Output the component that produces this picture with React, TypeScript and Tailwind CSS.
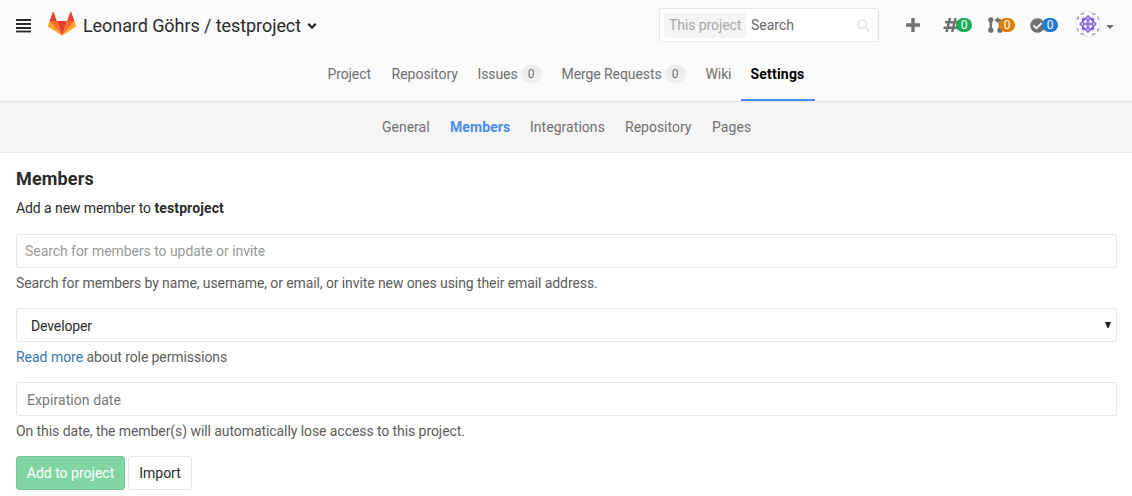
import { FaAngleDown, FaCheckCircle, FaSearch } from "react-icons/fa";
import type { ReactNode } from "react";

function Tanuki() {
  return (
    <svg className="h-[26px] w-[28px]" viewBox="0 0 36 36" preserveAspectRatio="none">
      <path fill="#e24329" d="M2 14l9.38 0L7.38 1.72c-.205-.632-1.176-.632-1.38 0z" />
      <path fill="#e24329" d="M34 14h-9.38l4-12.28c.205-.632 1.176-.632 1.38 0z" />
      <path fill="#e24329" d="M18 34.38L11.38 14h13.24z" />
      <path fill="#fc6d26" d="M18 34.38L11.38 14H2z" />
      <path fill="#fc6d26" d="M18 34.38L24.62 14H34z" />
      <path fill="#fca326" d="M2 14L.1 20.16c-.18.565 0 1.2.5 1.56L18 34.38z" />
      <path fill="#fca326" d="M34 14l1.9 6.16c.18.565 0 1.2-.5 1.56L18 34.38z" />
    </svg>
  );
}

function MenuIcon() {
  return (
    <svg className="mt-[3px] h-[14px] w-[15px] shrink-0 fill-[#2b2b2b]" viewBox="0 0 15 14">
      <rect y="0" width="15" height="2" />
      <rect y="4" width="15" height="2" />
      <rect y="8" width="15" height="2" />
      <rect y="11.6" width="15" height="1.8" />
    </svg>
  );
}

function PlusIcon() {
  return (
    <svg className="h-[14px] w-[14px]" viewBox="0 0 14 14">
      <path d="M7 1.7v10.6M1.7 7h10.6" stroke="#707070" strokeWidth="3.4" strokeLinecap="square" />
    </svg>
  );
}

function HashIcon() {
  return (
    <svg className="h-[16px] w-4" viewBox="0 0 16 16" fill="none" stroke="#707070" strokeWidth="2.5">
      <path d="M7 1L3.6 15M12.6 1L9.2 15M2 5.3h13.4M.6 10.7H14" />
    </svg>
  );
}

function MergeIcon() {
  return (
    <svg className="h-4 w-4 fill-[#707070]" viewBox="0 0 16 16">
      <circle cx="2.8" cy="2.8" r="2.6" />
      <circle cx="2.8" cy="13.2" r="2.6" />
      <circle cx="12" cy="13.2" r="2.6" />
      <path d="M1.5 3h2.6v10H1.5zM6.5 3.1l4-3.1v1.8h.5c1.8 0 2.6 1.2 2.6 3.2v8h-3V6c0-1-.2-1.4-.6-1.4V6.3z" />
    </svg>
  );
}

function Avatar() {
  const angles = [0, 90, 180, 270];
  return (
    <svg className="h-[26px] w-[26px]" viewBox="-13 -13 26 26">
      <circle r="12.5" fill="#fff" stroke="#e0e0e0" strokeWidth=".8" />
      <g fill="#8265d6">
        {angles.map((a) => (
          <g key={a} transform={`rotate(${a})`}>
            <path fillRule="evenodd" d="M0-9.2L3.3-5.6 0-2-3.3-5.6zM0-6.7L-1.1-5.6 0-4.5 1.1-5.6z" />
            <path d="M2.6-6.2h3.6v3.6H4L2.6-4z" />
            <path d="M0 0L.2-3 3-.2z" />
            <path d="M3.4-11.6l4.4 2-2 .8zM9.4-8l2.2 4.5-2.4-2z" />
          </g>
        ))}
      </g>
    </svg>
  );
}

function Counter({ icon, color, count }: { icon: ReactNode; color: string; count: number }) {
  return (
    <a className="flex items-center">
      {icon}
      <span className={`relative flex h-[14px] w-4 items-center justify-center rounded-full text-[12px] leading-none text-white ${color}`}>{count}</span>
    </a>
  );
}

function Tab({ label, count, active, tracking = "" }: { label: string; count?: number; active?: boolean; tracking?: string }) {
  return (
    <li className={`flex h-[52px] items-center gap-[3px] px-[10px] text-[14px] ${active ? "border-b-2 border-[#4a8bee] font-bold text-black" : "pb-[2px] text-[#707070]"}`}>
      <span className={tracking}>{label}</span>
      {count !== undefined && (
        <span className="flex h-[18px] w-[21px] items-center justify-center rounded-full bg-[#eeeeee] text-[12px]">{count}</span>
      )}
    </li>
  );
}

export default function App() {
  return (
    <div className="h-[496px] w-[1132px] overflow-hidden bg-white font-['Roboto',sans-serif] text-[14px] leading-5 text-[#2b2b2b]">
      <header className="border-b border-[#e1e1e1] bg-[#fafafa]">
        <div className="flex h-[49px] items-center pl-4 pr-[18px]">
          <MenuIcon />
          <div className="ml-[17px] mt-[-1px] shrink-0"><Tanuki /></div>
          <h1 className="ml-[7px] mt-[2px] whitespace-nowrap text-[18px] tracking-[-0.075px]">Leonard Göhrs / testproject</h1>
          <FaAngleDown className="ml-[4px] mt-[3px] h-[14px] w-[14px]" />
          <div className="ml-auto mt-[1px] flex h-[34px] w-[220px] shrink-0 items-center rounded-[2px] border border-[#e5e5e5] bg-white px-1">
            <span className="flex h-[25px] w-[82px] items-center whitespace-nowrap rounded-[2px] bg-[#f4f4f4] pl-[5px] text-[#a8a8a8] tracking-[-0.08px]">This project</span>
            <span className="ml-[5px] text-[#6b6b6b]">Search</span>
            <FaSearch className="ml-auto mr-1 h-[13px] w-[13px] text-[#e7e9ed]" />
          </div>
          <div className="ml-[27px] mt-[1px] flex w-[152px] shrink-0 items-center text-[#707070]">
            <PlusIcon />
            <div className="ml-[23px]"><Counter icon={<HashIcon />} color="bg-[#1aaa55] -ml-[3px]" count={0} /></div>
            <div className="ml-4"><Counter icon={<MergeIcon />} color="bg-[#de7e00] -ml-[5px]" count={0} /></div>
            <div className="ml-[15px]"><Counter icon={<FaCheckCircle className="h-[15px] w-[15px]" />} color="bg-[#1f78d1] -ml-[3px]" count={0} /></div>
          </div>
          <div className="ml-[17px] mt-[-1px] flex shrink-0 items-center"><Avatar /><span className="ml-[5px] mt-[6px] border-x-[4px] border-t-[4px] border-x-transparent border-t-[#707070]" /></div>
        </div>
        <ul className="flex h-[52px] items-start justify-center">
          <Tab label="Project" tracking="w-[44px] tracking-[-0.1px]" />
          <Tab label="Repository" tracking="w-[66px]" />
          <Tab label="Issues" count={0} tracking="w-[40px] tracking-[-0.1px]" />
          <Tab label="Merge Requests" count={0} tracking="w-[100px] whitespace-nowrap tracking-[-0.08px]" />
          <Tab label="Wiki" tracking="w-[25px] tracking-[-0.1px]" />
          <Tab label="Settings" active tracking="w-[54px] tracking-[0.2px]" />
        </ul>
      </header>
      <nav className="flex h-[51px] items-center justify-center gap-5 border-b border-[#e5e5e5] bg-[#f5f5f5] pl-px text-[#707070]">
        <a className="w-12">General</a>
        <a className="w-[60px] font-bold text-[#4a8bee] tracking-[0.08px]">Members</a>
        <a className="w-[75px] tracking-[0.04px]">Integrations</a>
        <a className="w-[67px]">Repository</a>
        <a className="w-[39px] tracking-[0.1px]">Pages</a>
      </nav>
      <main className="pl-4 pr-[15px] pt-4">
        <h4 className="text-[18px] font-bold leading-5 tracking-[0.15px]">Members</h4>
        <p className="mt-[9px] tracking-[-0.08px]">Add a new member to <strong className="font-bold tracking-[0.12px]">testproject</strong></p>
        <div className="mt-4 flex h-[34px] items-center rounded-[2px] border border-[#e5e5e5] px-2 text-[#999] tracking-[-0.055px]">Search for members to update or invite</div>
        <p className="mt-[5px] text-[#5c5c5c] tracking-[-0.093px]">Search for members by name, username, or email, or invite new ones using their email address.</p>
        <div className="mt-[15px] flex h-[34px] items-center justify-between rounded-[2px] border border-[#e5e5e5] pl-[14px] pr-[5px] pt-[2px]">
          <span className="tracking-[-0.12px]">Developer</span>
          <svg className="mb-[2px] h-[6px] w-[6px]" viewBox="0 0 6 6"><path d="M0 0h6L3.5 6h-1z" fill="#1c1c1c" /></svg>
        </div>
        <p className="mt-[5px] text-[#5c5c5c] tracking-[-0.09px]"><a className="text-[#3777b0] tracking-[-0.03px]">Read more</a> about role permissions</p>
        <div className="mt-[15px] flex h-[34px] items-center rounded-[2px] border border-[#e5e5e5] px-[10px] pt-[2px] text-[#777] tracking-[0.07px]">Expiration date</div>
        <p className="mt-[5px] text-[#5c5c5c] tracking-[-0.075px]">On this date, the member(s) will automatically lose access to this project.</p>
        <div className="mt-[15px] flex gap-[3px]">
          <button className="h-[34px] w-[109px] rounded-[3px] border border-[#75c999] bg-[#81d5a3] text-white">Add to project</button>
          <button className="h-[34px] w-[64px] rounded-[3px] border border-[#e5e5e5] bg-white">Import</button>
        </div>
      </main>
    </div>
  );
}
